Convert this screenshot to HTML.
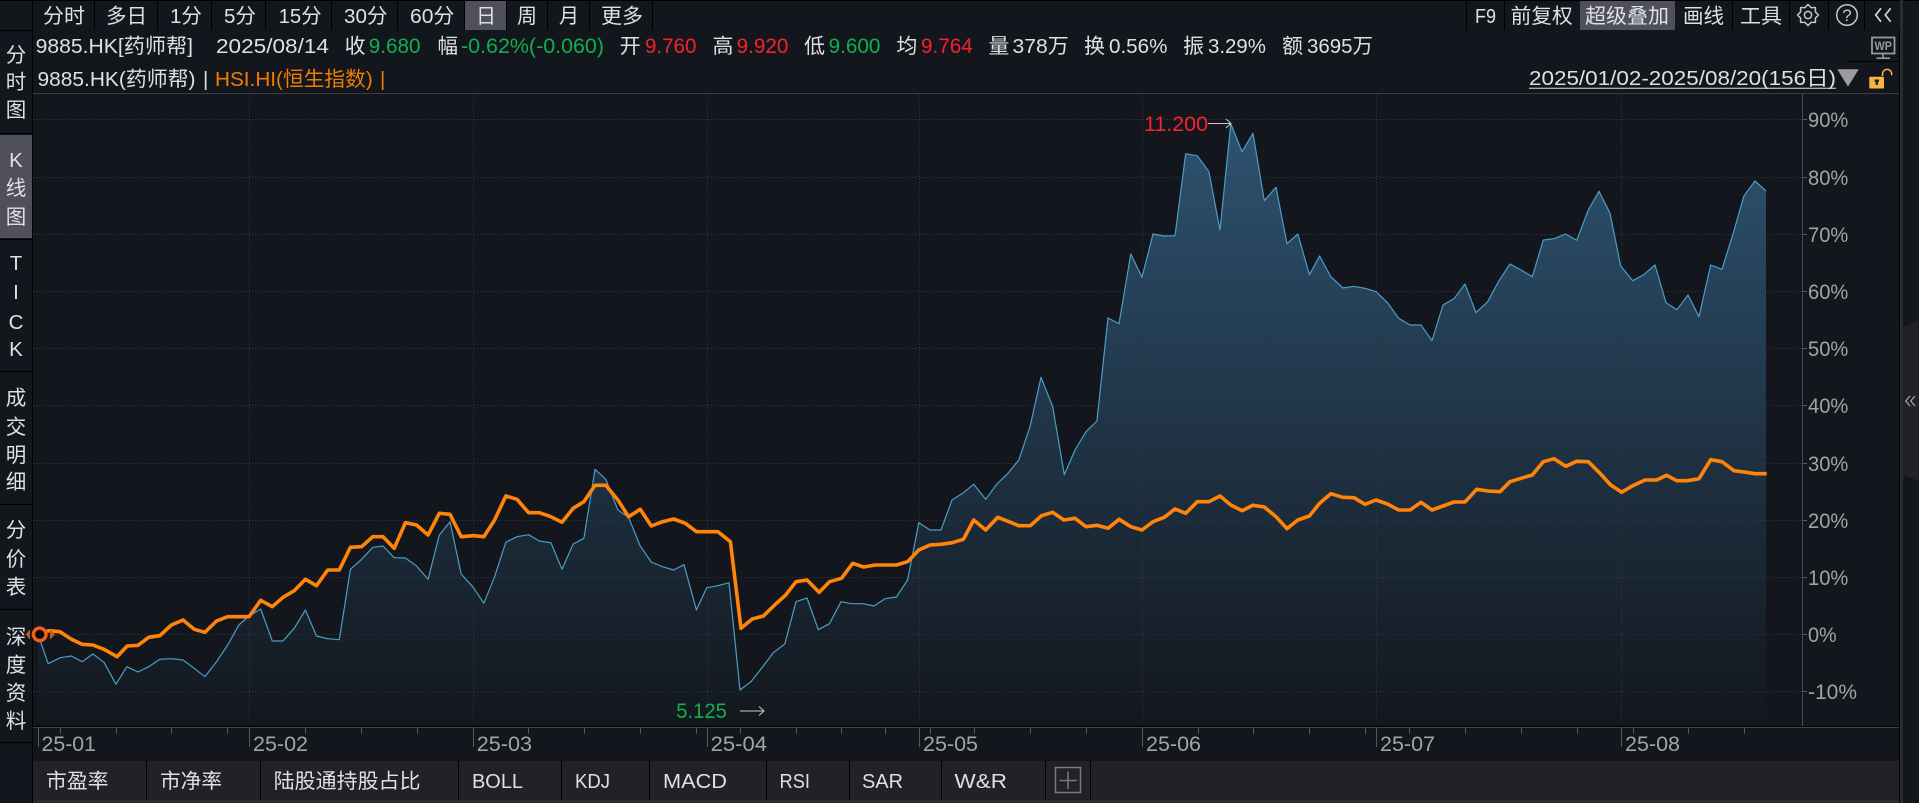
<!DOCTYPE html>
<html lang="zh"><head><meta charset="utf-8"><title>9885.HK</title>
<style>
html,body{margin:0;padding:0;background:#13171d;overflow:hidden}
svg{display:block;position:absolute;left:0;top:0}
text{font-family:"Liberation Sans","Noto Sans CJK SC",sans-serif;font-size:20.5px;fill:#dde1e5}
.g{fill:#0fb14c;font-size:21px}.r{fill:#f4222f;font-size:21px}.o{fill:#f07c00}.a{fill:#a3a3a3;font-size:21px}
.s{text-anchor:middle}
</style></head><body>
<svg width="1919" height="803" viewBox="0 0 1919 803" xmlns="http://www.w3.org/2000/svg">
<defs><linearGradient id="f" gradientUnits="userSpaceOnUse" x1="0" y1="123" x2="0" y2="727">
<stop offset="0" stop-color="#2d5270"/><stop offset="1" stop-color="#13171d"/></linearGradient></defs>
<rect width="1919" height="803" fill="#13171d"/>
<!-- area fill -->
<polygon fill="url(#f)" points="38,727 38,634.3 48.2,663.7 60.3,657.7 71.4,656 82.1,661.7 92.9,654 104,662.3 116,684.3 126.8,666.7 138,672 148.7,666.7 159.8,659.3 171.4,658.7 183,660 194.2,668.3 204.9,676.7 216.5,661.7 227.7,645 238.8,625 249,616 260.7,609 272.3,641 283,641 294.2,628.3 305.4,610 316.5,636 327.7,638.7 339.3,639.7 350.4,569.3 361.6,559.3 372.8,547.3 383,546 394.2,557.7 405.4,558 416.5,566 428.1,579.3 439.3,535 450,521.7 461.2,574 473.2,587.3 483.9,603.3 494.6,576.7 505.8,542.3 517,536.7 528.6,534.7 539.3,541 550.9,542.7 562,569.3 573.2,544 583.9,538.3 595,469.3 605.8,479.3 617.9,510 628.6,517.3 640.2,546 651.3,562 662.5,566.7 673.7,570 684,564.7 696.4,610 706.7,587.7 718,585.7 729,582.7 740,690 751,681.7 762.5,667 773.7,652.3 784.8,644 796,601.7 807,598 818.3,629.7 829.5,623.7 841,601.7 851.8,603.7 863,603.7 874,606 885,598.7 896.4,597 907.6,580 918.8,522.7 930,530 941,530 952,500 963.4,492.7 973.7,484.3 985.7,499.3 996.9,484 1008,473.3 1018.8,460 1030,426.7 1041,377.3 1052.7,406.7 1064.3,474.7 1075,450 1086,431.7 1096.9,421 1108,318 1119,323.7 1130.8,254 1142,277.3 1153,234 1164.3,236 1175,235.7 1185.7,153.7 1197.3,155.7 1208.9,171.7 1220,230 1230.8,123.7 1242,151.7 1253,133.3 1264.3,200.7 1276,187.3 1287,243.7 1297.8,234 1309.4,274.7 1319.6,256 1330.8,276.7 1342.9,288 1354,286.3 1365,288.3 1376,291.7 1387.5,302.7 1398.7,318.3 1410,325 1421,325 1432,340.7 1443,305 1454,298.7 1465,284 1476,312.7 1487.7,301.7 1499,280.7 1510,264 1521,270 1532.3,276.7 1543.3,240 1554,238.7 1565.7,234 1576.7,240.3 1588.3,210 1599,191.3 1610,213.3 1620.7,266 1632.7,280.7 1643.7,274.7 1655,265 1666,302.7 1677,309.7 1688,295 1699,316.7 1710.7,265 1722,269.3 1733.3,233 1744,195.7 1755,181 1766,191 1766,727"/>
<!-- grid -->
<g stroke="#33363b" stroke-width="1" stroke-dasharray="1 2" shape-rendering="crispEdges" fill="none">
<path d="M33 119.5H1802M33 177.5H1802M33 234.5H1802M33 291.5H1802M33 348.5H1802M33 405.5H1802M33 463.5H1802M33 520.5H1802M33 577.5H1802M33 634.5H1802M33 691.5H1802"/>
<path d="M249.5 95V725M473.5 95V725M707.5 95V725M919.5 95V725M1142.5 95V725M1376.5 95V725M1621.5 95V725"/>
</g>
<!-- series -->
<polyline fill="none" stroke="#4a9dc6" stroke-width="1.2" stroke-linejoin="round" points="38,634.3 48.2,663.7 60.3,657.7 71.4,656 82.1,661.7 92.9,654 104,662.3 116,684.3 126.8,666.7 138,672 148.7,666.7 159.8,659.3 171.4,658.7 183,660 194.2,668.3 204.9,676.7 216.5,661.7 227.7,645 238.8,625 249,616 260.7,609 272.3,641 283,641 294.2,628.3 305.4,610 316.5,636 327.7,638.7 339.3,639.7 350.4,569.3 361.6,559.3 372.8,547.3 383,546 394.2,557.7 405.4,558 416.5,566 428.1,579.3 439.3,535 450,521.7 461.2,574 473.2,587.3 483.9,603.3 494.6,576.7 505.8,542.3 517,536.7 528.6,534.7 539.3,541 550.9,542.7 562,569.3 573.2,544 583.9,538.3 595,469.3 605.8,479.3 617.9,510 628.6,517.3 640.2,546 651.3,562 662.5,566.7 673.7,570 684,564.7 696.4,610 706.7,587.7 718,585.7 729,582.7 740,690 751,681.7 762.5,667 773.7,652.3 784.8,644 796,601.7 807,598 818.3,629.7 829.5,623.7 841,601.7 851.8,603.7 863,603.7 874,606 885,598.7 896.4,597 907.6,580 918.8,522.7 930,530 941,530 952,500 963.4,492.7 973.7,484.3 985.7,499.3 996.9,484 1008,473.3 1018.8,460 1030,426.7 1041,377.3 1052.7,406.7 1064.3,474.7 1075,450 1086,431.7 1096.9,421 1108,318 1119,323.7 1130.8,254 1142,277.3 1153,234 1164.3,236 1175,235.7 1185.7,153.7 1197.3,155.7 1208.9,171.7 1220,230 1230.8,123.7 1242,151.7 1253,133.3 1264.3,200.7 1276,187.3 1287,243.7 1297.8,234 1309.4,274.7 1319.6,256 1330.8,276.7 1342.9,288 1354,286.3 1365,288.3 1376,291.7 1387.5,302.7 1398.7,318.3 1410,325 1421,325 1432,340.7 1443,305 1454,298.7 1465,284 1476,312.7 1487.7,301.7 1499,280.7 1510,264 1521,270 1532.3,276.7 1543.3,240 1554,238.7 1565.7,234 1576.7,240.3 1588.3,210 1599,191.3 1610,213.3 1620.7,266 1632.7,280.7 1643.7,274.7 1655,265 1666,302.7 1677,309.7 1688,295 1699,316.7 1710.7,265 1722,269.3 1733.3,233 1744,195.7 1755,181 1766,191"/>
<polyline fill="none" stroke="#ff8409" stroke-width="3.6" stroke-linejoin="round" points="38,634 49,630.7 60,631.7 71.4,639.3 82,644.3 92.9,645 104,649.3 117,656.7 127.2,646 138,645.3 148.7,637.3 159.8,635.7 171.4,625 183,620 194.2,629.3 204.9,632.3 216.5,621 227.7,616.7 238.8,616.7 249,616.7 260.7,600.3 272.3,606.7 283,597.3 294.2,590.7 305.4,579.3 316.5,585.7 327.7,570 339.3,570 350.4,547.3 361.6,546.7 372.8,536.7 383,536.7 394.2,548.3 405.4,522.7 416.5,525 428.1,535 439.3,513.3 450,514.3 461.2,536.7 473.2,535.7 483.9,536.7 494.6,520 505.8,496 517,499.3 528.6,512.7 539.3,512.7 550.9,516.7 562,522.3 573.2,508.3 583.9,501.7 595,485.3 605.8,485.3 617.9,500 628.6,516.7 640.2,509.3 651.3,526 662.5,521.7 673.7,519 685.3,523.3 696.4,531.7 706.7,531.7 717.9,531.7 730.4,541.7 741,628.3 752.2,619 763.4,616 774.6,605 785.7,595 796,581.7 807,580 819.2,592.3 829.5,581.7 841.5,578.3 852.7,563.3 863.8,567 875,565 885.5,565 896.4,565 907.6,561.7 918.8,550 930,545 941,544.3 952.2,542.7 963.4,539.3 973.7,520 985.7,530 997.8,517.3 1008,521.3 1018.8,525.7 1030.4,525.7 1041.5,515.7 1052.7,512.3 1063.8,520 1075,518.3 1086,526.7 1096.9,525.3 1108,528.3 1119.2,519.3 1130.8,526.7 1142,530 1153,521.7 1164.3,517.3 1175,509 1185.7,513.3 1197.3,501.7 1208.9,501.7 1220,496 1230.8,505 1242,510.7 1253,505.3 1264.3,507 1276,516.7 1287,528.7 1297.8,520 1309.4,516 1319.6,503.3 1330.8,493.7 1342.9,497.3 1354,497.7 1365,504.3 1376,500 1387.5,504 1398.7,510 1410,510 1421,502.3 1432,510 1443,506 1454,502 1465,502 1476.7,489.3 1487.7,491 1500,491.7 1510,481.7 1521,478.3 1532.3,475 1543.3,461.7 1554,458.7 1565.7,466.3 1576.7,461.3 1588.3,461.7 1600,473.3 1610.7,485 1621.7,492.3 1632.7,485.7 1645,480 1656.7,480 1666.7,475.3 1676.7,480.7 1687.3,480.7 1699,478.7 1710.7,459.7 1722,461.7 1734,470.7 1744,472 1755,473.7 1766.7,473.7"/>
<!-- frame lines -->
<g shape-rendering="crispEdges" fill="none">
<path d="M0 .5H1919" stroke="#000"/>
<path d="M0 30.5H32.5" stroke="#000"/>
<path d="M32 93.5H1900" stroke="#3a3d42"/>
<path d="M1802.5 94V726" stroke="#45484d"/>
<path d="M1802 119.5h5M1802 177.5h5M1802 234.5h5M1802 291.5h5M1802 348.5h5M1802 405.5h5M1802 463.5h5M1802 520.5h5M1802 577.5h5M1802 634.5h5M1802 691.5h5" stroke="#55585d"/>
<path d="M32 726.5H1900" stroke="#000"/>
<path d="M32 727.5H1900" stroke="#45484d"/>
<path d="M60.5 728v6M116.5 728v6M171.5 728v6M227.5 728v6M305.5 728v6M361.5 728v6M417.5 728v6M528.5 728v6M584.5 728v6M640.5 728v6M696.5 728v6M740.5 728v6M796.5 728v6M841.5 728v6M885.5 728v6M930.5 728v6M974.5 728v6M1030.5 728v6M1086.5 728v6M1198.5 728v6M1253.5 728v6M1309.5 728v6M1365.5 728v6M1409.5 728v6M1465.5 728v6M1521.5 728v6M1577.5 728v6M1633.5 728v6M1688.5 728v6M1744.5 728v6" stroke="#55585d"/>
<path d="M38.5 728v19M249.5 728v19M473.5 728v19M707.5 728v19M919.5 728v19M1142.5 728v19M1376.5 728v19M1621.5 728v19" stroke="#55585d"/>
</g>
<!-- top selected -->
<rect x="465" y="1" width="41" height="29" fill="#50505c"/>
<rect x="1580" y="1" width="95" height="29" fill="#50505c"/>
<g stroke="#000" shape-rendering="crispEdges" fill="none">
<path d="M94.5 1V30M157.5 1V30M211.5 1V30M265.5 1V30M331.5 1V30M397.5 1V30M464.5 1V30M506.5 1V30M547.5 1V30M589.5 1V30M652.5 1V30"/>
<path d="M1466.5 1V30M1504.5 1V30M1732.5 1V30M1789.5 1V30M1828.5 1V30M1864.5 1V30"/>
<path d="M1849 61.5H1900"/>
</g>
<!-- top bar text -->
<text x="43" y="23" textLength="42" lengthAdjust="spacingAndGlyphs">分时</text>
<text x="106" y="23" textLength="41" lengthAdjust="spacingAndGlyphs">多日</text>
<text x="170" y="23" textLength="32" lengthAdjust="spacingAndGlyphs">1分</text>
<text x="224" y="23" textLength="32" lengthAdjust="spacingAndGlyphs">5分</text>
<text x="278.6" y="23" textLength="43" lengthAdjust="spacingAndGlyphs">15分</text>
<text x="344" y="23" textLength="43.5" lengthAdjust="spacingAndGlyphs">30分</text>
<text x="410" y="23" textLength="44.5" lengthAdjust="spacingAndGlyphs">60分</text>
<text x="476" y="23" textLength="20" lengthAdjust="spacingAndGlyphs">日</text>
<text x="517" y="23" textLength="20" lengthAdjust="spacingAndGlyphs">周</text>
<text x="559" y="23" textLength="20" lengthAdjust="spacingAndGlyphs">月</text>
<text x="601" y="23" textLength="42" lengthAdjust="spacingAndGlyphs">更多</text>
<text x="1475" y="23" textLength="21" lengthAdjust="spacingAndGlyphs">F9</text>
<text x="1510.7" y="23" textLength="62" lengthAdjust="spacingAndGlyphs">前复权</text>
<text x="1585" y="23" textLength="84" lengthAdjust="spacingAndGlyphs">超级叠加</text>
<text x="1683" y="23" textLength="41" lengthAdjust="spacingAndGlyphs">画线</text>
<text x="1740" y="23" textLength="42" lengthAdjust="spacingAndGlyphs">工具</text>
<!-- top icons -->
<polygon transform="translate(1808 15)" fill="none" stroke="#c8c8c8" stroke-width="1.5" stroke-linejoin="round" points="10.5,0 7.39,3.06 7.42,7.42 3.06,7.39 0,10.5 -3.06,7.39 -7.42,7.42 -7.39,3.06 -10.5,0 -7.39,-3.06 -7.42,-7.42 -3.06,-7.39 0,-10.5 3.06,-7.39 7.42,-7.42 7.39,-3.06"/>
<circle cx="1808" cy="15" r="3.6" fill="none" stroke="#c8c8c8" stroke-width="1.5"/>
<circle cx="1847" cy="15" r="10.3" fill="none" stroke="#c8c8c8" stroke-width="1.5"/>
<text x="1847" y="21" class="s" style="font-size:17px;fill:#c8c8c8">?</text>
<path d="M1881 8.3L1875.7 15L1881 21.7M1890.7 8.3L1885.3 15L1890.7 21.7" fill="none" stroke="#dcdcdc" stroke-width="1.6"/>
<!-- WP monitor -->
<rect x="1872" y="37.5" width="22.5" height="16" fill="none" stroke="#9a9a9a" stroke-width="1.8"/>
<text x="1874.5" y="50" textLength="17.5" lengthAdjust="spacingAndGlyphs" style="font-size:12px;font-weight:700;fill:#9a9a9a">WP</text>
<path d="M1883 54v3.5M1876.5 58.2H1890" stroke="#9a9a9a" stroke-width="1.6" fill="none"/>
<!-- info row -->
<text x="35.7" y="53" textLength="157.3" lengthAdjust="spacingAndGlyphs">9885.HK[药师帮]</text>
<text x="216" y="53" textLength="113" lengthAdjust="spacingAndGlyphs">2025/08/14</text>
<text x="344.6" y="53" textLength="21" lengthAdjust="spacingAndGlyphs">收</text><text x="368.7" y="53" textLength="51.8" lengthAdjust="spacingAndGlyphs" class="g">9.680</text>
<text x="437.5" y="53" textLength="20.5" lengthAdjust="spacingAndGlyphs">幅</text><text x="461" y="53" textLength="143" lengthAdjust="spacingAndGlyphs" class="g">-0.62%(-0.060)</text>
<text x="619.6" y="53" textLength="21" lengthAdjust="spacingAndGlyphs">开</text><text x="645" y="53" textLength="51.4" lengthAdjust="spacingAndGlyphs" class="r">9.760</text>
<text x="712.5" y="53" textLength="21" lengthAdjust="spacingAndGlyphs">高</text><text x="736.6" y="53" textLength="51.8" lengthAdjust="spacingAndGlyphs" class="r">9.920</text>
<text x="804" y="53" textLength="21" lengthAdjust="spacingAndGlyphs">低</text><text x="828.6" y="53" textLength="51.8" lengthAdjust="spacingAndGlyphs" class="g">9.600</text>
<text x="896.4" y="53" textLength="21" lengthAdjust="spacingAndGlyphs">均</text><text x="921" y="53" textLength="51.8" lengthAdjust="spacingAndGlyphs" class="r">9.764</text>
<text x="988.4" y="53" textLength="21" lengthAdjust="spacingAndGlyphs">量</text><text x="1012.5" y="53" textLength="56.3" lengthAdjust="spacingAndGlyphs">378万</text>
<text x="1084" y="53" textLength="21" lengthAdjust="spacingAndGlyphs">换</text><text x="1109" y="53" textLength="58.4" lengthAdjust="spacingAndGlyphs">0.56%</text>
<text x="1183" y="53" textLength="21" lengthAdjust="spacingAndGlyphs">振</text><text x="1208" y="53" textLength="58" lengthAdjust="spacingAndGlyphs">3.29%</text>
<text x="1282" y="53" textLength="21" lengthAdjust="spacingAndGlyphs">额</text><text x="1307" y="53" textLength="66" lengthAdjust="spacingAndGlyphs">3695万</text>
<!-- row 3 -->
<text x="37.5" y="86" textLength="158" lengthAdjust="spacingAndGlyphs">9885.HK(药师帮)</text>
<text x="203" y="86">|</text>
<text x="215" y="86" textLength="157.8" lengthAdjust="spacingAndGlyphs" class="o">HSI.HI(恒生指数)</text>
<text x="380" y="86" class="o">|</text>
<text x="1529" y="85" textLength="307" lengthAdjust="spacingAndGlyphs">2025/01/02-2025/08/20(156日)</text>
<path d="M1529 88.2H1836" stroke="#dde1e5" stroke-width="1" fill="none"/>
<polygon points="1837.3,69.3 1858.7,69.3 1848,86.7" fill="#9b9b9b"/>
<rect x="1869.3" y="76.7" width="14.7" height="11.8" rx="1" fill="#f5b63e"/>
<rect x="1875.6" y="80" width="2.4" height="5" fill="#222"/><rect x="1874.6" y="79.5" width="4.4" height="2.4" fill="#222"/>
<path d="M1882.5 76V74a4.6 4.6 0 0 1 9.2 0v1.2" fill="none" stroke="#f5b63e" stroke-width="1.5"/>
<!-- y labels -->
<g class="ya">
<text x="1808" y="127" textLength="40.3" lengthAdjust="spacingAndGlyphs" class="a">90%</text>
<text x="1808" y="185" textLength="40.3" lengthAdjust="spacingAndGlyphs" class="a">80%</text>
<text x="1808" y="242" textLength="40.3" lengthAdjust="spacingAndGlyphs" class="a">70%</text>
<text x="1808" y="299" textLength="40.3" lengthAdjust="spacingAndGlyphs" class="a">60%</text>
<text x="1808" y="356" textLength="40.3" lengthAdjust="spacingAndGlyphs" class="a">50%</text>
<text x="1808" y="413" textLength="40.3" lengthAdjust="spacingAndGlyphs" class="a">40%</text>
<text x="1808" y="471" textLength="40.3" lengthAdjust="spacingAndGlyphs" class="a">30%</text>
<text x="1808" y="528" textLength="40.3" lengthAdjust="spacingAndGlyphs" class="a">20%</text>
<text x="1808" y="585" textLength="40.3" lengthAdjust="spacingAndGlyphs" class="a">10%</text>
<text x="1808" y="642" textLength="28.7" lengthAdjust="spacingAndGlyphs" class="a">0%</text>
<text x="1808" y="699" textLength="49" lengthAdjust="spacingAndGlyphs" class="a">-10%</text>
</g>
<!-- x labels -->
<text x="41.5" y="751" textLength="54.5" lengthAdjust="spacingAndGlyphs" class="a">25-01</text>
<text x="253" y="751" textLength="55" lengthAdjust="spacingAndGlyphs" class="a">25-02</text>
<text x="476.8" y="751" textLength="55.2" lengthAdjust="spacingAndGlyphs" class="a">25-03</text>
<text x="710.7" y="751" textLength="56.3" lengthAdjust="spacingAndGlyphs" class="a">25-04</text>
<text x="923" y="751" textLength="55" lengthAdjust="spacingAndGlyphs" class="a">25-05</text>
<text x="1146" y="751" textLength="55" lengthAdjust="spacingAndGlyphs" class="a">25-06</text>
<text x="1380" y="751" textLength="55" lengthAdjust="spacingAndGlyphs" class="a">25-07</text>
<text x="1625" y="751" textLength="55" lengthAdjust="spacingAndGlyphs" class="a">25-08</text>
<!-- annotations -->
<text x="1144" y="131" textLength="64" lengthAdjust="spacingAndGlyphs" class="r">11.200</text>
<path d="M1208 123.5H1231M1226 119L1231 123.5L1226 128" stroke="#c9c9c9" stroke-width="1" fill="none"/>
<text x="676.3" y="718" textLength="50.5" lengthAdjust="spacingAndGlyphs" class="g">5.125</text>
<path d="M740 711H764M759 706.5L764 711L759 715.5" stroke="#c9c9c9" stroke-width="1" fill="none"/>
<!-- bottom bar -->
<rect x="33" y="761" width="1867" height="39" fill="#212126"/>
<rect x="33" y="800" width="1867" height="3" fill="#2a2b30"/>
<g stroke="#000" shape-rendering="crispEdges" fill="none">
<path d="M146.5 761V800M260.5 761V800M458.5 761V800M561.5 761V800M649.5 761V800M766.5 761V800M849.5 761V800M941.5 761V800M1045.5 761V800M1090.5 761V800"/>
</g>
<g>
<text x="46" y="788" textLength="62.5" lengthAdjust="spacingAndGlyphs">市盈率</text>
<text x="160" y="788" textLength="62" lengthAdjust="spacingAndGlyphs">市净率</text>
<text x="273.7" y="788" textLength="146.8" lengthAdjust="spacingAndGlyphs">陆股通持股占比</text>
<text x="472" y="788" textLength="51" lengthAdjust="spacingAndGlyphs">BOLL</text>
<text x="575" y="788" textLength="35" lengthAdjust="spacingAndGlyphs">KDJ</text>
<text x="663" y="788" textLength="64" lengthAdjust="spacingAndGlyphs">MACD</text>
<text x="779.5" y="788" textLength="30.5" lengthAdjust="spacingAndGlyphs">RSI</text>
<text x="862" y="788" textLength="41" lengthAdjust="spacingAndGlyphs">SAR</text>
<text x="954.5" y="788" textLength="52.5" lengthAdjust="spacingAndGlyphs">W&amp;R</text>
</g>
<rect x="1055.5" y="767.5" width="25" height="25" fill="none" stroke="#7a7a7a" stroke-width="1.5"/>
<path d="M1068 771.5V789M1059.5 780.5H1077" stroke="#7a7a7a" stroke-width="1.5" fill="none"/>
<!-- sidebar -->
<rect x="0" y="135" width="32" height="103" fill="#50505c"/>
<g stroke="#000" shape-rendering="crispEdges" fill="none">
<path d="M32.5 0V803"/>
<path d="M0 133.5H32M0 239.5H32M0 371.5H32M0 504.5H32M0 609.5H32M0 742.5H32"/>
</g>
<g class="side">
<text x="16" y="62" class="s">分</text><text x="16" y="89" class="s">时</text><text x="16" y="117" class="s">图</text>
<text x="16" y="167" class="s">K</text><text x="16" y="195" class="s">线</text><text x="16" y="224" class="s">图</text>
<text x="16" y="270" class="s">T</text><text x="16" y="299" class="s">I</text><text x="16" y="329" class="s">C</text><text x="16" y="356" class="s">K</text>
<text x="16" y="405" class="s">成</text><text x="16" y="434" class="s">交</text><text x="16" y="462" class="s">明</text><text x="16" y="489" class="s">细</text>
<text x="16" y="537" class="s">分</text><text x="16" y="566" class="s">价</text><text x="16" y="594" class="s">表</text>
<text x="16" y="644" class="s">深</text><text x="16" y="672" class="s">度</text><text x="16" y="700" class="s">资</text><text x="16" y="728" class="s">料</text>
</g>
<!-- start marker -->
<polygon points="30,629.5 30,639.5 25.5,634.5" fill="#c8571d"/>
<polygon points="50,629.5 50,639.5 55,634.5" fill="#c8571d"/>
<circle cx="39.7" cy="634.4" r="6.3" fill="#0b0b0b" stroke="#f0601c" stroke-width="3.4"/>
<!-- right panel -->
<rect x="1899" y="30" width="1" height="773" fill="#000"/>
<rect x="1900" y="0" width="3" height="803" fill="#2a2b30"/>
<polygon points="1903,327 1919,320 1919,481 1903,475" fill="#212126"/>
<path d="M1910 396L1905.7 401L1910 406M1915 396L1910.7 401L1915 406" fill="none" stroke="#aeaeae" stroke-width="1.1"/>
</svg>
</body></html>
